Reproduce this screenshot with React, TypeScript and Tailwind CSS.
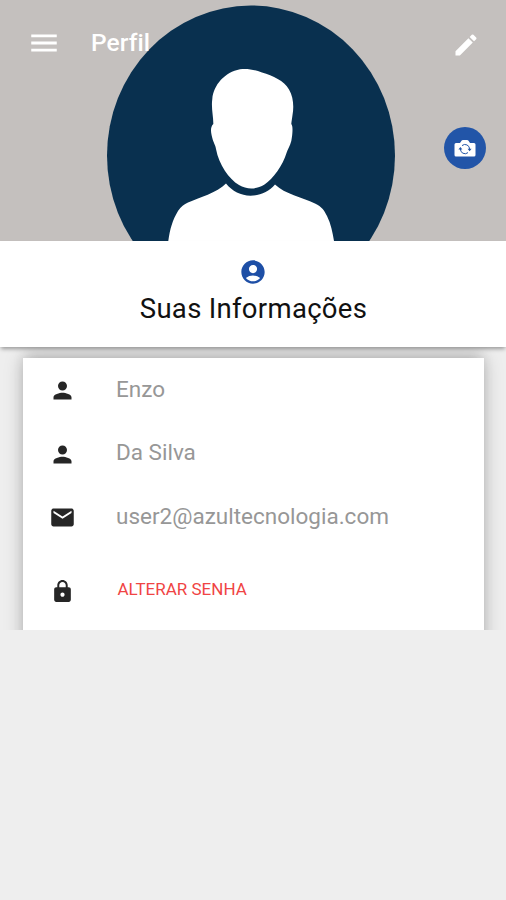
import type { ReactNode } from "react";
import {
  MdAccountCircle,
  MdEdit,
  MdEmail,
  MdLock,
  MdMenu,
  MdPerson,
} from "react-icons/md";

function Avatar() {
  return (
    <svg
      viewBox="0 0 506 241"
      className="absolute inset-0 h-full w-full"
      aria-hidden="true"
    >
      <ellipse cx="251" cy="155.5" rx="144" ry="150" fill="#09304f" />
      {/* Shoulders */}
      <path
        d="M168.3 241C170 229 172.500 220 178 211C181 206.500 184 204.500 188 202.500C199 197.500 217 193 226 183.500C232 191 241 195.700 250.500 195.700C260 195.700 269 191.500 275 184.500C285 194 302 197.500 315 203.500C322 207 324 210 327 216C331 224 332.500 232 334 241Z"
        fill="#fff"
      />
      {/* Head */}
      <path
        d="M240 69.300C247 68.300 254 69.500 262 72.500C273 76 284 80.500 289 89.500C293.500 97 294 107 292.500 115C292 119 291.500 121 291.300 124C293.200 126 292.600 134 291.300 141C290 146 287.700 149 286.500 153C283 165 273 179 264.500 184.500C256 189.700 247 189.700 239 185C229 179 219 165 216 149C215.500 145 213.500 143 212.300 138C211 133 209.800 127.500 213.300 124C213.500 117 211 108 212.300 99C213.500 85 225 72 240 69.300Z"
        fill="#fff"
      />
    </svg>
  );
}

function CameraSwapIcon() {
  return (
    <svg width="22" height="17" viewBox="0 0 22 17" aria-hidden="true">
      <path
        d="M2 3h4l1.500-2.200Q8 0 9 0h4q1 0 1.500.8L16 3h4q1.500 0 1.500 1.500v10.500q0 1.500-1.500 1.500H2Q.5 16.500.5 15V4.500Q.5 3 2 3Z"
        fill="currentColor"
      />
      <g fill="none" stroke="#2255a8" strokeWidth="1">
        <path d="M8 5.600a4.600 4.600 0 0 1 7.600 3.600" />
        <path d="M14 12.600a4.600 4.600 0 0 1-7.600-3.600" />
      </g>
      <path d="M13.600 8.800h4l-2 2.500ZM4.400 9.400h4l-2-2.500Z" fill="#2255a8" />
    </svg>
  );
}

function Row({ icon, children }: { icon: ReactNode; children: ReactNode }) {
  return (
    <div className="flex h-[63.5px] items-center pb-[2px] pl-[26px]">
      <span className="mt-1 w-[67px] text-[27px] text-[#262626]">{icon}</span>
      <span className="text-[22.5px] leading-7 text-[#979797]">{children}</span>
    </div>
  );
}

export default function App() {
  return (
    <div className="h-[900px] w-[506px] overflow-hidden bg-[#eeeeee] font-['Roboto',sans-serif]">
      <header className="relative h-[241px] bg-[#c4c0be]">
        <Avatar />
        <div className="relative flex h-[86px] items-center pr-[26px] pl-[27px] text-white">
          <button aria-label="Menu">
            <MdMenu size={34} />
          </button>
          <h1 className="ml-[30px] text-[24.5px] font-medium tracking-[0.1px]">
            Perfil
          </h1>
          <button aria-label="Editar" className="mt-1 ml-auto">
            <MdEdit size={28} />
          </button>
        </div>
        <button
          aria-label="Trocar foto"
          className="absolute top-[127px] right-[20.5px] flex size-[42px] items-center justify-center rounded-full bg-[#2255a8] text-white"
        >
          <CameraSwapIcon />
        </button>
      </header>

      <section className="relative z-10 flex h-[106px] flex-col items-center bg-white pt-[17px] shadow-[0_3px_4px_-1px_rgba(0,0,0,0.35)]">
        <MdAccountCircle size={28} className="text-[#1e4fa6]" />
        <h2 className="mt-[5px] ml-px text-[27.5px] leading-9 tracking-[0.3px] text-[#111]">
          Suas Informações
        </h2>
      </section>

      {/* The list is cut off at its bottom edge, shadow included */}
      <div className="h-[283px] overflow-hidden px-[23px] pt-[11px]">
        <div className="h-[300px] w-[461px] bg-white shadow-[0_0_18px_rgba(0,0,0,0.22),0_-6px_12px_-2px_rgba(0,0,0,0.12)]">
          <Row icon={<MdPerson />}>Enzo</Row>
          <Row icon={<MdPerson />}>Da Silva</Row>
          <Row icon={<MdEmail />}>user2@azultecnologia.com</Row>
          <div className="flex h-[83px] items-center pl-[27px]">
            <span className="mt-[3px] w-[67.5px] text-[25px] text-[#262626]">
              <MdLock />
            </span>
            <button className="text-[17px] text-[#f04444]">
              ALTERAR SENHA
            </button>
          </div>
        </div>
      </div>
    </div>
  );
}
